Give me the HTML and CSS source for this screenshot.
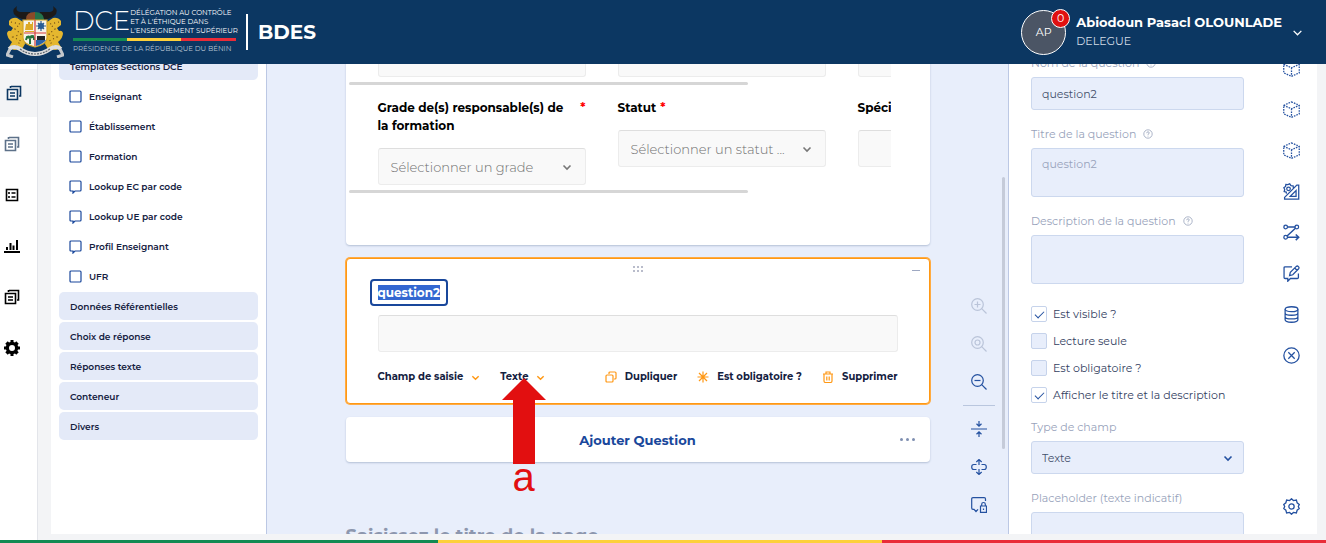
FILE: index.html
```
<!doctype html>
<html lang="fr">
  <head>
    <meta charset="UTF-8" />
    <meta name="viewport" content="width=device-width, initial-scale=1.0" />
    <title>BDES</title>
    <link rel="stylesheet" href="styles.css">
  </head>
  <body>
    <svg class="sprite" aria-hidden="true">
      <symbol id="i-copy" viewBox="0 0 16 16">
        <path d="M1.500 4.500h10v10h-10zM5 1.500h9.500V11H13M4 8h5M4 11h5M4.500 1v2" />
      </symbol>
      <symbol id="i-list" viewBox="0 0 16 16">
        <path d="M2.500 2.500h11v11h-11zM7.500 6h4M7.500 10h4M5 5v2M5 9v2" />
      </symbol>
      <symbol id="i-chart" viewBox="0 0 16 16">
        <path d="M0 14h16M3 12V9M6.500 12V5M9.500 12V7.500M13 12V2" stroke-width="2" />
      </symbol>
      <symbol id="i-cog" viewBox="0 0 16 16">
        <path d="M0 6.500h3v3H0zM13 6.500h3v3h-3zM6.500 0h3v3h-3zM6.500 13h3v3h-3z" fill="currentColor" stroke="none" />
        <path d="M2.500 2.500l2 2M13.500 2.500l-2 2M2.500 13.500l2-2M13.500 13.500l-2-2" stroke-width="3.500" />
        <circle cx="8" cy="8" r="4.600" stroke-width="3.200" />
      </symbol>
      <symbol id="i-down" viewBox="0 0 10 10">
        <path d="M1.500 3.500L5 7l3.500-3.500" />
      </symbol>
      <symbol id="i-box" viewBox="0 0 14 14">
        <rect x="1" y="1" width="11" height="11" rx="1" />
      </symbol>
      <symbol id="i-bubble" viewBox="0 0 14 14">
        <path d="M2 1h9q1 0 1 1v8q0 1-1 1H6l-2 2v-2H2q-1 0-1-1V2q0-1 1-1z" />
      </symbol>
      <symbol id="i-help" viewBox="0 0 10 10">
        <circle cx="5" cy="5" r="4.200" />
        <path d="M3.700 4.200q0-1.400 1.300-1.400t1.300 1.200Q6.300 4.800 5 5.200v.6M5 6.700v.8" />
      </symbol>
      <symbol id="i-cube" viewBox="0 0 16 16">
        <path d="M8 .8l7.300 3.300v8L8 15.400.7 12.100v-8zM.7 4.100L8 7.300l7.300-3.200M8 7.300v8" stroke-dasharray="1.500 1" />
      </symbol>
      <symbol id="i-design" viewBox="0 0 16 16">
        <circle cx="5.200" cy="5.500" r="1.700" />
        <path d="M9.800 4.500L9.500 2.700 7.500 2.500 6.300.8 4.500 1.500 2.700 1.300l-.3 2L.8 4.500l.8 1.700-.5 1.900 1.900.4.300 1.500M1.500 13.500L13 2h1.800v13.200H1.500zM12.300 7v5.500H6.800z" />
      </symbol>
      <symbol id="i-logic" viewBox="0 0 16 16">
        <circle cx="2.500" cy="2.800" r="1.700" />
        <circle cx="13" cy="2.800" r="1.700" />
        <circle cx="2.500" cy="12.500" r="1.700" />
        <path d="M4.200 2.800h7.100M11.700 4L3.800 11.300M4.200 12.500h10.500M12 9.800l2.800 2.700-2.800 2.700" stroke-width="1.400" />
      </symbol>
      <symbol id="i-comment" viewBox="0 0 16 16">
        <path d="M8.500 1.700H2q-1 0-1 1v9q0 1 1 1h2.500v2.600L7 12.700h6.500q1 0 1-1V8M6.200 10l.7-3.200L12.500 1.300q1-.8 2 .2t.2 2L9.200 9.200zM11 2.800L13.200 5" />
      </symbol>
      <symbol id="i-data" viewBox="0 0 16 16">
        <ellipse cx="8" cy="3" rx="6" ry="2.300" />
        <path d="M2 3v10q0 2.300 6 2.300t6-2.300V3M2 6.500q0 2.200 6 2.200t6-2.200M2 10q0 2.200 6 2.200t6-2.200" />
      </symbol>
      <symbol id="i-cross" viewBox="0 0 16 16">
        <circle cx="8" cy="8" r="7.200" />
        <path d="M5 5l6 6M11 5l-6 6" />
      </symbol>
      <symbol id="i-gear" viewBox="0 0 16 16">
        <circle cx="8" cy="8" r="2.500" />
        <path d="M8 .7l1.800 1.700 2.800-.5.700 2.600 2 1.600L14.400 8l.9 2-2 1.500-.7 2.600-2.800-.5L8 15.300l-1.800-1.700-2.800.5-.7-2.600-2-1.500.9-2-.9-1.900 2-1.600.7-2.600 2.800.5z" />
      </symbol>
      <symbol id="i-zoom" viewBox="0 0 16 16">
        <circle cx="6.500" cy="6.500" r="5.800" />
        <path d="M10.700 10.700L15.500 15.500" />
      </symbol>
    </svg>

    <header class="topbar">
      <a class="brand" href="#">
        <svg class="crest" viewBox="0 0 58 52" role="img" aria-label="Armoiries du Bénin">
          <g fill="#1d1a19">
            <path d="M24 14q-9 0-14-4Q4 5 11 0q-2 5 3 6 4 0 10 0z" />
            <path d="M34 14q9 0 14-4 6-5-1-10 2 5-3 6-4 0-10 0z" />
          </g>
          <path d="M20 13q0-7 9-7v8h-8z" fill="#8b4b29" />
          <path d="M29 14V6q8 0 9 7v1z" fill="#24734b" />
          <g fill="#e5b72f">
            <path d="M3 15q3-4 8-3l6 4v7l1 8 1 7-3 5-8 1-5-3 3-5q-5-4-5-9 1-3 4-2l2-3-4-3z" />
            <path d="M55 15q-3-4-8-3l-6 4v7l-1 8-1 7 3 5 8 1 5-3-3-5q5-4 5-9-1-3-4-2l-2-3 4-3z" />
          </g>
          <g fill="none" stroke="#6d4a16" stroke-dasharray="1 3">
            <path d="M5 16l9 2-5 5 6 5-8 3 8 4-5 5" />
            <path d="M53 16l-9 2 5 5-6 5 8 3-8 4 5 5" />
          </g>
          <path d="M17 14h24v18q0 6-12 9-12-3-12-9z" fill="#f6f3e9" stroke="#d5a526" />
          <path d="M20 18h2v-2h2v2h2v-2h1v8h-8zM19 25h9v1h-9z" fill="#dda926" />
          <circle cx="35" cy="20" r="3" fill="#2a5d95" />
          <path d="M35 15v10M30 20h10M32 17l6 6M38 17l-6 6" stroke="#2a5d95" />
          <path d="M24 30v8M20 34q1-5 4-3 4-3 4 3M20 31l4 1 4-2" fill="none" stroke="#22733e" stroke-width="2" />
          <path d="M30 34h10q-3 4-10 6z" fill="#2b62a8" />
          <path d="M31 30h8v4h-8z" fill="#1f2328" />
          <path d="M29 14v26M18 27h22" stroke="#d53c3c" />
          <path d="M3 43q5-4 11 0 7 5 15 5t15-5q6-4 11 0" fill="none" stroke="#dedede" stroke-width="4" />
          <path d="M4 43l-3 6 6 2M54 43l3 6-6 2" fill="none" stroke="#c5c8cb" stroke-width="3" />
          <path d="M14 43q7 5 15 5t15-5" fill="none" stroke="#59626b" stroke-dasharray="2 1" />
        </svg>
        <span class="logo">
          <span class="logo-top">
            <span class="logo-name">DCE</span>
            <span class="logo-tag">DÉLÉGATION AU CONTRÔLE<br>ET À L'ÉTHIQUE DANS<br>L'ENSEIGNEMENT SUPÉRIEUR</span>
          </span>
          <span class="logo-flag"></span>
          <span class="logo-sub">PRÉSIDENCE DE LA RÉPUBLIQUE DU BÉNIN</span>
        </span>
        <span class="app-name">BDES</span>
      </a>
      <button class="user" type="button">
        <span class="avatar">AP<span class="badge">0</span></span>
        <span class="user-text">
          <strong>Abiodoun Pasacl OLOUNLADE</strong>
          <span>DELEGUE</span>
        </span>
        <svg class="user-arrow"><use href="#i-down" /></svg>
      </button>
    </header>

    <div class="shell">
      <nav class="sidenav">
        <a class="active" href="#" aria-label="Formulaires"><svg><use href="#i-copy" /></svg></a>
        <a class="dim" href="#" aria-label="Modèles"><svg><use href="#i-copy" /></svg></a>
        <a href="#" aria-label="Listes"><svg><use href="#i-list" /></svg></a>
        <a href="#" aria-label="Statistiques"><svg><use href="#i-chart" /></svg></a>
        <a href="#" aria-label="Documents"><svg><use href="#i-copy" /></svg></a>
        <a href="#" aria-label="Paramètres"><svg><use href="#i-cog" /></svg></a>
      </nav>

      <main class="creator">
        <aside class="toolbox">
          <div class="toolbox-scroll">
            <button class="category" type="button">Templates Sections DCE</button>
            <button class="tool" type="button"><svg><use href="#i-box" /></svg>Enseignant</button>
            <button class="tool" type="button"><svg><use href="#i-box" /></svg>Établissement</button>
            <button class="tool" type="button"><svg><use href="#i-box" /></svg>Formation</button>
            <button class="tool" type="button"><svg><use href="#i-bubble" /></svg>Lookup EC par code</button>
            <button class="tool" type="button"><svg><use href="#i-bubble" /></svg>Lookup UE par code</button>
            <button class="tool" type="button"><svg><use href="#i-bubble" /></svg>Profil Enseignant</button>
            <button class="tool" type="button"><svg><use href="#i-box" /></svg>UFR</button>
            <button class="category" type="button">Données Référentielles</button>
            <button class="category" type="button">Choix de réponse</button>
            <button class="category" type="button">Réponses texte</button>
            <button class="category" type="button">Conteneur</button>
            <button class="category" type="button">Divers</button>
          </div>
        </aside>

        <section class="canvas">
          <div class="page">
            <div class="card panel-card">
              <div class="scroll-row previous">
                <div class="cells">
                  <div class="cell"><div class="field-box"></div></div>
                  <div class="cell"><div class="field-box"></div></div>
                  <div class="cell"><div class="field-box"></div></div>
                </div>
                <div class="thumb"></div>
              </div>
              <div class="scroll-row">
                <div class="cells">
                  <div class="cell">
                    <label for="grade"><span>Grade de(s) responsable(s) de<br>la formation</span> <em>*</em></label>
                    <div class="select">
                      <select class="field-box" id="grade"><option>Sélectionner un grade</option></select>
                      <svg><use href="#i-down" /></svg>
                    </div>
                  </div>
                  <div class="cell">
                    <label for="statut"><span>Statut</span> <em>*</em></label>
                    <div class="select">
                      <select class="field-box" id="statut"><option>Sélectionner un statut ...</option></select>
                      <svg><use href="#i-down" /></svg>
                    </div>
                  </div>
                  <div class="cell">
                    <label for="spec"><span>Spécialité</span></label>
                    <input class="field-box" id="spec" type="text">
                  </div>
                </div>
                <div class="thumb"></div>
              </div>
            </div>

            <div class="card question selected">
              <div class="question-top">
                <svg class="drag" viewBox="0 0 10 6"><path d="M0 1h2M4 1h2M8 1h2M0 5h2M4 5h2M8 5h2" /></svg>
                <button class="collapse" type="button" aria-label="Réduire"></button>
              </div>
              <span class="question-title" contenteditable="true" spellcheck="false"><mark>question2</mark></span>
              <input class="field-box" type="text" aria-label="question2">
              <div class="actions">
                <button type="button">Champ de saisie <svg class="small"><use href="#i-down" /></svg></button>
                <button type="button">Texte <svg class="small"><use href="#i-down" /></svg></button>
                <button class="push" type="button"><svg viewBox="0 0 12 12"><path d="M4 3V2q0-1 1-1h5q1 0 1 1v5q0 1-1 1H9M2 4h5q1 0 1 1v5q0 1-1 1H2q-1 0-1-1V5q0-1 1-1z" /></svg>Dupliquer</button>
                <button type="button"><svg viewBox="0 0 12 12"><path d="M6 .5v11M.5 6h11M2 2l8 8M10 2l-8 8" /></svg>Est obligatoire ?</button>
                <button type="button"><svg viewBox="0 0 12 12"><path d="M1 3h10M4 3V1h4v2M2 3v7q0 1.500 1.500 1.500h5Q10 11.500 10 10V3M4.800 5.500v4M7.200 5.500v4" /></svg>Supprimer</button>
              </div>
              <div class="callout">
                <svg viewBox="0 0 44 86"><path d="M22 0l22 22H33v64H11V22H0z" /></svg>
                <span>a</span>
              </div>
            </div>

            <div class="card add-card">
              <button class="add" type="button">Ajouter Question</button>
              <button class="more" type="button" aria-label="Plus"><svg viewBox="0 0 15 3"><circle cx="1.500" cy="1.500" r="1.500" /><circle cx="7.500" cy="1.500" r="1.500" /><circle cx="13.500" cy="1.500" r="1.500" /></svg></button>
            </div>
            <h2 class="page-title">Saisissez le titre de la page.</h2>
          </div>

          <div class="canvas-tools">
            <button type="button" disabled aria-label="Zoom avant"><svg viewBox="0 0 16 16"><use href="#i-zoom" /><path d="M3.500 6.500h6M6.500 3.500v6" /></svg></button>
            <button type="button" disabled aria-label="Zoom 100%"><svg viewBox="0 0 16 16"><use href="#i-zoom" /><circle cx="6.500" cy="6.500" r="2.500" /></svg></button>
            <button type="button" aria-label="Zoom arrière"><svg viewBox="0 0 16 16"><use href="#i-zoom" /><path d="M3.500 6.500h6" /></svg></button>
            <hr>
            <button type="button" aria-label="Tout réduire"><svg viewBox="0 0 16 16"><path d="M0 8h16M8 0v5M5.500 2.800L8 5.200l2.500-2.400M8 16v-5M5.500 13.200L8 10.800l2.500 2.400" /></svg></button>
            <button type="button" aria-label="Tout développer"><svg viewBox="0 0 16 16"><path d="M8 6V.5M5.300 3L8 .5 10.700 3M8 10v5.500M5.300 13L8 15.500l2.700-2.500M5.500 5.500H2.800Q.7 5.500.7 8t2.100 2.500h2.700M10.500 5.500h2.700q2.100 0 2.100 2.500t-2.100 2.500h-2.700" /></svg></button>
            <button type="button" aria-label="Verrouiller les questions"><svg viewBox="0 0 16 16"><path d="M14.500 4V2q0-1.300-1.300-1.300H2Q.7.700.7 2v9q0 1.300 1.300 1.300h1L5 14.500l2-2.200M9.500 9h6v6.300h-6zM10.700 9V7.200q0-1.700 1.800-1.700t1.800 1.700V9M12.500 11.500v1.500" /></svg></button>
          </div>
          <div class="canvas-scrollbar"></div>
        </section>

        <aside class="properties">
          <form class="props">
            <div class="field">
              <label for="name">Nom de la question <svg><use href="#i-help" /></svg></label>
              <input id="name" type="text" value="question2">
            </div>
            <div class="field">
              <label for="title">Titre de la question <svg><use href="#i-help" /></svg></label>
              <textarea id="title" placeholder="question2"></textarea>
            </div>
            <div class="field">
              <label for="desc">Description de la question <svg><use href="#i-help" /></svg></label>
              <textarea id="desc"></textarea>
            </div>
            <div class="checks">
              <label><input type="checkbox" checked>Est visible ?</label>
              <label><input type="checkbox">Lecture seule</label>
              <label><input type="checkbox">Est obligatoire ?</label>
              <label><input type="checkbox" checked>Afficher le titre et la description</label>
            </div>
            <div class="field">
              <label for="type">Type de champ</label>
              <div class="select">
                <select id="type"><option>Texte</option></select>
                <svg><use href="#i-down" /></svg>
              </div>
            </div>
            <div class="field">
              <label for="ph">Placeholder (texte indicatif)</label>
              <input id="ph" type="text">
            </div>
          </form>
          <div class="tabs">
            <button type="button" aria-label="Général"><svg><use href="#i-cube" /></svg></button>
            <button type="button" aria-label="Choix"><svg><use href="#i-cube" /></svg></button>
            <button type="button" aria-label="Données"><svg><use href="#i-cube" /></svg></button>
            <button type="button" aria-label="Disposition"><svg><use href="#i-design" /></svg></button>
            <button type="button" aria-label="Conditions"><svg><use href="#i-logic" /></svg></button>
            <button type="button" aria-label="Saisie"><svg><use href="#i-comment" /></svg></button>
            <button type="button" aria-label="Source"><svg><use href="#i-data" /></svg></button>
            <button type="button" aria-label="Validation"><svg><use href="#i-cross" /></svg></button>
            <button class="last" type="button" aria-label="Réglages"><svg><use href="#i-gear" /></svg></button>
          </div>
        </aside>
      </main>
    </div>

    <footer class="flag"></footer>
  </body>
</html>
```
FILE: styles.css
```
* {
  box-sizing: border-box;
}
body {
  display: flex;
  flex-direction: column;
  height: 100vh;
  margin: 0;
  overflow: hidden;
  background-color: #f3f4f6;
  color: #14213f;
  font-family: Montserrat, Inter, sans-serif;
  font-size: 11px;
}
button,
input,
select,
textarea {
  font: inherit;
  color: inherit;
}
button {
  display: flex;
  align-items: center;
  padding: 0;
  border: none;
  background: none;
  cursor: pointer;
}
svg {
  flex: none;
  fill: none;
  stroke: currentColor;
  stroke-width: 1.2;
}
.sprite {
  position: absolute;
  width: 0;
  height: 0;
}

/* top bar */
.topbar {
  display: flex;
  justify-content: space-between;
  align-items: center;
  flex: none;
  position: relative;
  z-index: 2;
  height: 64px;
  padding: 0 23px 0 6px;
  background-color: #0c3762;
  color: white;
}
.brand {
  display: flex;
  align-items: center;
  color: white;
  text-decoration: none;
}
.crest {
  width: 58px;
  height: 52px;
  margin-right: 9px;
  stroke: none;
}
.logo {
  display: flex;
  flex-direction: column;
  gap: 3px;
  width: 163px;
  padding-bottom: 2px;
}
.logo-top {
  display: flex;
  justify-content: space-between;
  align-items: center;
  white-space: nowrap;
}
.logo-name {
  font-size: 26px;
  font-weight: 300;
  line-height: 27px;
}
.logo-tag {
  font-size: 7px;
  line-height: 9px;
}
.logo-flag {
  height: 3px;
  background: linear-gradient(90deg, #128a53 33%, #fdd03b 33% 66%, #e92c38 66%);
}
.logo-sub {
  color: #b6c4d3;
  font-size: 7px;
  line-height: 10px;
  white-space: nowrap;
}
.app-name {
  margin-left: 10px;
  padding-left: 10px;
  border-left: 2px solid white;
  font-size: 20px;
  font-weight: 700;
  line-height: 36px;
}
.user {
  text-align: left;
}
.avatar {
  display: flex;
  align-items: center;
  justify-content: center;
  position: relative;
  width: 45px;
  height: 45px;
  border: 1px solid white;
  border-radius: 50%;
  background-color: #4b5565;
}
.badge {
  position: absolute;
  top: -2px;
  right: -5px;
  width: 19px;
  height: 19px;
  border: 1px solid white;
  border-radius: 50%;
  background-color: #e01010;
  line-height: 17px;
  text-align: center;
}
.user-text {
  display: flex;
  flex-direction: column;
  margin: 0 10px;
  line-height: 19px;
}
.user-text strong {
  font-size: 13px;
}
.user-text span {
  color: #d3dbe5;
}
.user-arrow {
  width: 11px;
  height: 11px;
}

/* left navigation */
.shell {
  display: flex;
  flex: 1;
  min-height: 0;
}
.sidenav {
  display: flex;
  flex-direction: column;
  flex: none;
  gap: 3px;
  width: 38px;
  padding-top: 5px;
  border-right: 1px solid #e3e5ea;
  background-color: white;
}
.sidenav a {
  display: flex;
  align-items: center;
  height: 48px;
  padding-left: 4px;
  color: black;
}
.sidenav .active {
  padding-left: 6px;
  background-color: #f3f4f6;
  color: #0c3762;
}
.sidenav .dim {
  color: #5d7189;
}
.sidenav svg {
  width: 16px;
  height: 16px;
  stroke-width: 1.6;
}

.creator {
  display: flex;
  flex: 1;
  min-width: 0;
  margin: 0 9px 6px 13px;
  overflow: hidden;
  background-color: white;
}

/* toolbox */
.toolbox {
  flex: none;
  width: 216px;
  padding: 0 8px;
  border-right: 1px solid #bcc8e4;
}
.toolbox-scroll {
  display: flex;
  flex-direction: column;
  margin-top: -13px;
}
.toolbox button {
  width: 100%;
  font-size: 9px;
  font-weight: 600;
}
.category {
  height: 28px;
  margin: 1px 0;
  padding-left: 11px;
  border-radius: 5px;
  background-color: #e4eaf8;
}
.tool {
  gap: 6px;
  height: 30px;
  padding-left: 10px;
}
.tool svg {
  width: 14px;
  height: 14px;
  margin-top: 1px;
  color: #19479b;
}

/* design surface */
.canvas {
  display: grid;
  grid-template-columns: 1fr minmax(0, 584px) 1fr;
  flex: 1;
  position: relative;
  min-width: 0;
  background-color: #e8eefb;
}
.page {
  grid-column: 2;
  display: flex;
  flex-direction: column;
  gap: 13px;
  min-height: 0;
}
.card {
  flex: none;
  border-radius: 4px;
  background-color: white;
  box-shadow: 0 1px 2px #b3bfd6;
}
.panel-card {
  margin-top: -24px;
  padding: 0 39px 52px 3px;
}
.scroll-row {
  overflow: hidden;
}
.cells {
  display: grid;
  grid-template-columns: repeat(3, 208px);
  gap: 32px;
  padding: 14px 0 5px 29px;
}
.previous .cells {
  padding-top: 0;
}
.thumb {
  width: 399px;
  max-width: 100%;
  height: 3px;
  border-radius: 2px;
  background-color: #d6d6d6;
}
.cell label {
  display: flex;
  justify-content: space-between;
  margin-bottom: 13px;
  color: black;
  font-size: 12px;
  font-weight: 700;
  line-height: 18px;
}
.cell:nth-child(2) label {
  justify-content: flex-start;
  gap: 4px;
}
.cell em {
  color: red;
  font-style: normal;
}
.field-box {
  display: block;
  width: 100%;
  height: 37px;
  padding: 0 12px;
  border: 1px solid #ececec;
  border-top-color: #dedede;
  border-radius: 3px;
  background-color: #f9f9f9;
  color: #707070;
  font-size: 13px;
  font-weight: 300;
}
.select {
  position: relative;
}
select {
  appearance: none;
}
.select svg {
  position: absolute;
  top: 50%;
  right: 14px;
  width: 10px;
  height: 10px;
  margin-top: -5px;
  color: #777;
  stroke-width: 1.6;
  pointer-events: none;
}
.question {
  position: relative;
  padding: 0 31px 17px;
  border: 1px solid #ff9814;
  box-shadow: 0 0 0 1px #ffab42;
}
.question-top {
  display: flex;
  align-items: center;
  justify-content: center;
  height: 20px;
}
.drag {
  width: 10px;
  height: 6px;
  color: #b9bccb;
  stroke-width: 2;
}
.collapse {
  position: absolute;
  top: 11px;
  right: 9px;
  width: 8px;
  height: 1px;
  background-color: #9ea8c2;
}
.question-title {
  display: block;
  width: max-content;
  margin: 0 0 9px -8px;
  padding: 3px 6px;
  border: 2px solid #19479b;
  border-radius: 4px;
  font-size: 12px;
  font-weight: 700;
  line-height: 17px;
}
.question-title mark {
  background-color: #3367d1;
  color: white;
}
.actions {
  display: flex;
  gap: 20px;
  margin-top: 16px;
  white-space: nowrap;
}
.actions button {
  gap: 8px;
  font-size: 10px;
  font-weight: 700;
  line-height: 18px;
}
.actions svg {
  width: 12px;
  height: 12px;
  color: #ff9814;
}
.actions .small {
  width: 9px;
  height: 9px;
  stroke-width: 1.6;
}
.actions .push {
  margin-left: auto;
}
.callout {
  display: flex;
  flex-direction: column;
  align-items: center;
  position: absolute;
  top: 119px;
  left: 155px;
  z-index: 1;
  color: #e20f10;
  font-family: "Liberation Sans", sans-serif;
  font-size: 40px;
  line-height: 27px;
}
.callout svg {
  width: 44px;
  height: 86px;
  fill: #e20f10;
  stroke: none;
}
.add-card {
  display: flex;
  position: relative;
  height: 45px;
}
.add {
  flex: 1;
  justify-content: center;
  color: #19479b;
  font-size: 13px;
  font-weight: 700;
}
.more {
  position: absolute;
  top: 21px;
  right: 15px;
  color: #7f8fb1;
}
.more svg {
  width: 15px;
  height: 3px;
  fill: currentColor;
  stroke: none;
}
.page-title {
  margin: 47px 0 0;
  color: #8d97ae;
  font-size: 18px;
  font-weight: 700;
  line-height: 28px;
}
.canvas-tools {
  display: flex;
  flex-direction: column;
  align-items: flex-end;
  justify-content: flex-end;
  padding: 0 13px 10px 0;
}
.canvas-tools button {
  justify-content: center;
  width: 32px;
  height: 38px;
  color: #2451a0;
}
.canvas-tools button:disabled {
  color: #bac4d9;
}
.canvas-tools svg {
  width: 16px;
  height: 16px;
}
.canvas-tools hr {
  width: 32px;
  height: 1px;
  margin: 4px 0;
  border: none;
  background-color: #b9c6de;
}
.canvas-scrollbar {
  position: absolute;
  top: 113px;
  right: 3px;
  width: 3px;
  height: 272px;
  border-radius: 2px;
  background-color: #c5cbd9;
}

/* property panel */
.properties {
  display: flex;
  flex: none;
  width: 309px;
  border-left: 1px solid #bcc8e4;
}
.props {
  flex: 1;
  margin-top: -9px;
  padding-left: 22px;
}
.field {
  margin-bottom: 16px;
}
.field label {
  display: flex;
  align-items: center;
  gap: 7px;
  margin-bottom: 6px;
  color: #98a3bb;
  line-height: 16px;
}
.field label svg {
  width: 10px;
  height: 10px;
  stroke-width: 0.8;
}
.field input,
.field select,
.field textarea {
  display: block;
  width: 100%;
  height: 33px;
  padding: 0 10px;
  border: 1px solid #ccd8ee;
  border-radius: 3px;
  background-color: #e8eefb;
  color: #44506b;
}
.field textarea {
  height: 49px;
  padding-top: 8px;
  resize: none;
}
.field textarea::placeholder {
  color: #98a3bb;
}
.field .select svg {
  right: 11px;
  color: #2451a0;
}
.checks {
  margin-bottom: 11px;
}
.checks label {
  display: flex;
  align-items: center;
  gap: 6px;
  height: 27px;
  color: #33415f;
  white-space: nowrap;
}
.checks input {
  appearance: none;
  display: flex;
  justify-content: center;
  width: 16px;
  height: 16px;
  margin: 0;
  border: 1px solid #c6d3eb;
  border-radius: 2px;
  background-color: #e8eefb;
}
.checks input:checked {
  background-color: white;
}
.checks input:checked::after {
  content: "";
  width: 4px;
  height: 8px;
  margin-top: 2px;
  border: solid #2451a0;
  border-width: 0 1px 1px 0;
  transform: rotate(45deg);
}
.tabs {
  display: flex;
  flex-direction: column;
  gap: 24px;
  margin-top: -4px;
  padding: 0 17px 19px 39px;
}
.tabs svg {
  width: 17px;
  height: 17px;
  color: #2451a0;
}
.tabs .last {
  margin-top: auto;
}

.flag {
  flex: none;
  height: 3px;
  background: linear-gradient(90deg, #128a53 33%, #fdd03b 33% 66.5%, #e92c38 66.5%);
}
```
